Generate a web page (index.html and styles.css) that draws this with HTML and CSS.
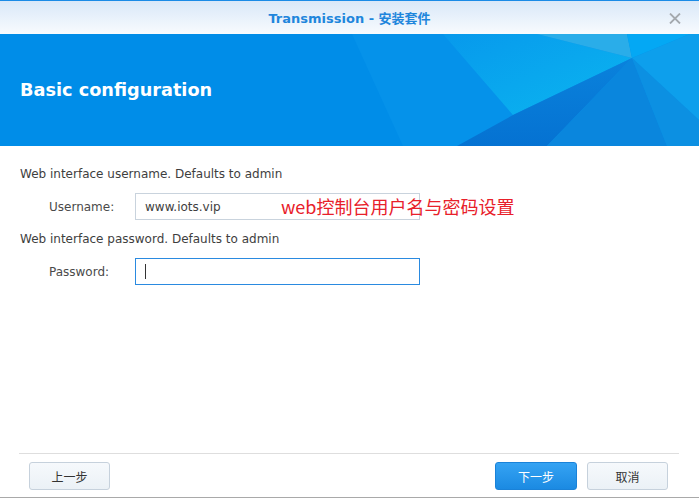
FILE: index.html
```html
<!DOCTYPE html>
<html lang="zh">
<head>
<meta charset="utf-8">
<title>Transmission - 安装套件</title>
<link rel="stylesheet" href="styles.css">
</head>
<body>
<div class="window">
  <header class="titlebar">
    <span></span>
    <span class="title">Transmission - 安装套件</span>
    <span class="close" aria-label="关闭">
      <svg width="12" height="11" viewBox="0 0 12 11"><path d="M1 0.5 L11 10.5 M11 0.5 L1 10.5" stroke="#a4a9ae" stroke-width="1.8" fill="none"/></svg>
    </span>
  </header>
  <section class="banner">
    <svg class="banner-art" viewBox="0 0 699 112" preserveAspectRatio="none">
      <defs>
        <linearGradient id="cy" x1="0" y1="0" x2="1" y2="1">
          <stop offset="0" stop-color="#0799ec"/>
          <stop offset="1" stop-color="#0bb6f0"/>
        </linearGradient>
        <linearGradient id="dk" x1="0" y1="0" x2="0" y2="1">
          <stop offset="0" stop-color="#0a82dc"/>
          <stop offset="1" stop-color="#0572d2"/>
        </linearGradient>
      </defs>
      <rect width="699" height="112" fill="#008de8"/>
      <polygon points="352,0 699,0 699,112 403,112" fill="#0592ea"/>
      <polygon points="443,0 537,0 632,24 513,81" fill="url(#cy)"/>
      <polygon points="537,0 627,0 632,24" fill="#2aade9"/>
      <polygon points="627,0 690,0 632,24" fill="#04a8f4"/>
      <polygon points="690,0 699,0 699,86 632,24" fill="#0d9fec"/>
      <polygon points="632,24 513,81 457,112 547,112" fill="url(#dk)"/>
      <polygon points="632,24 547,112 667,112" fill="#0a86dd"/>
      <polygon points="632,24 667,112 699,112 699,86" fill="#0c90e2"/>
    </svg>
    <h1 class="banner-title">Basic configuration</h1>
  </section>
  <main class="content">
    <p class="desc">Web interface username. Defaults to admin</p>
    <div class="field">
      <label class="label">Username:</label>
      <div class="input">www.iots.vip</div>
      <span class="note">web控制台用户名与密码设置</span>
    </div>
    <p class="desc">Web interface password. Defaults to admin</p>
    <div class="field">
      <label class="label">Password:</label>
      <div class="input focus"><span class="caret"></span></div>
    </div>
  </main>
  <footer class="footer">
    <button class="btn">上一步</button>
    <span class="spacer"></span>
    <button class="btn primary">下一步</button>
    <button class="btn">取消</button>
  </footer>
</div>
</body>
</html>
```

FILE: styles.css
```css
html, body {
  margin: 0;
  padding: 0;
  background: #ffffff;
}
body {
  font-family: "DejaVu Sans", Verdana, sans-serif;
  font-size: 12px;
  color: #404040;
}
.window {
  height: 498px;
  box-sizing: border-box;
  display: flex;
  flex-direction: column;
  border-bottom: 1px solid #a9a9a9;
}
.titlebar {
  height: 33px;
  border-top: 1px solid #1a8be6;
  background: linear-gradient(#d9e8f8, #f8fbfe);
  display: grid;
  grid-template-columns: 1fr auto 1fr;
  align-items: center;
}
.title {
  font-weight: bold;
  font-size: 13px;
  color: #1f86dc;
  font-family: "DejaVu Sans", "Noto Sans CJK SC", sans-serif;
}
.close {
  justify-self: end;
  margin-right: 18px;
  display: flex;
  margin-top: 1px;
}
.banner {
  height: 112px;
  display: grid;
  overflow: hidden;
}
.banner-art {
  grid-area: 1 / 1;
  width: 699px;
  height: 112px;
  display: block;
}
.banner-title {
  grid-area: 1 / 1;
  align-self: center;
  margin: 0 0 0 20px;
  font-size: 17.7px;
  font-weight: bold;
  color: #ffffff;
  line-height: 22px;
  position: relative;
}
.content {
  flex: 1;
  padding: 166px 0 0 0;
  padding-top: 20px;
  padding-left: 20px;
}
.desc {
  margin: 0;
  line-height: 16px;
  color: #3e3e3e;
}
.field {
  display: flex;
  align-items: center;
  margin: 11px 0 11px 29px;
  position: relative;
}
.label {
  width: 86px;
  color: #4a4a4a;
}
.input {
  width: 285px;
  height: 27px;
  box-sizing: border-box;
  border: 1px solid #c9d3dd;
  padding-left: 9px;
  display: flex;
  align-items: center;
  color: #3e3e3e;
  background: #fff;
}
.input.focus {
  border-color: #2a8ae0;
}
.caret {
  width: 1px;
  height: 15px;
  background: #333;
}
.note {
  position: absolute;
  left: 232px;
  top: 2px;
  font-family: "Noto Sans CJK SC", sans-serif;
  font-size: 18px;
  line-height: 22px;
  color: #e8202a;
}
.footer {
  margin: 0 20px 0 19px;
  border-top: 1px solid #dedede;
  padding: 8px 11px 7px 10px;
  display: flex;
  gap: 10px;
}
.spacer {
  flex: 1;
}
.btn {
  width: 81px;
  height: 28px;
  box-sizing: border-box;
  border: 1px solid #c6d1dc;
  border-radius: 3px;
  background: linear-gradient(#f6f9fc, #ebf1f6);
  color: #333;
  font-family: "Noto Sans CJK SC", sans-serif;
  font-size: 12px;
  padding: 0;
}
.btn.primary {
  width: 82px;
  border-color: #1a82d8;
  background: linear-gradient(#35a3f3, #1b8ae2);
  color: #ffffff;
}
```
